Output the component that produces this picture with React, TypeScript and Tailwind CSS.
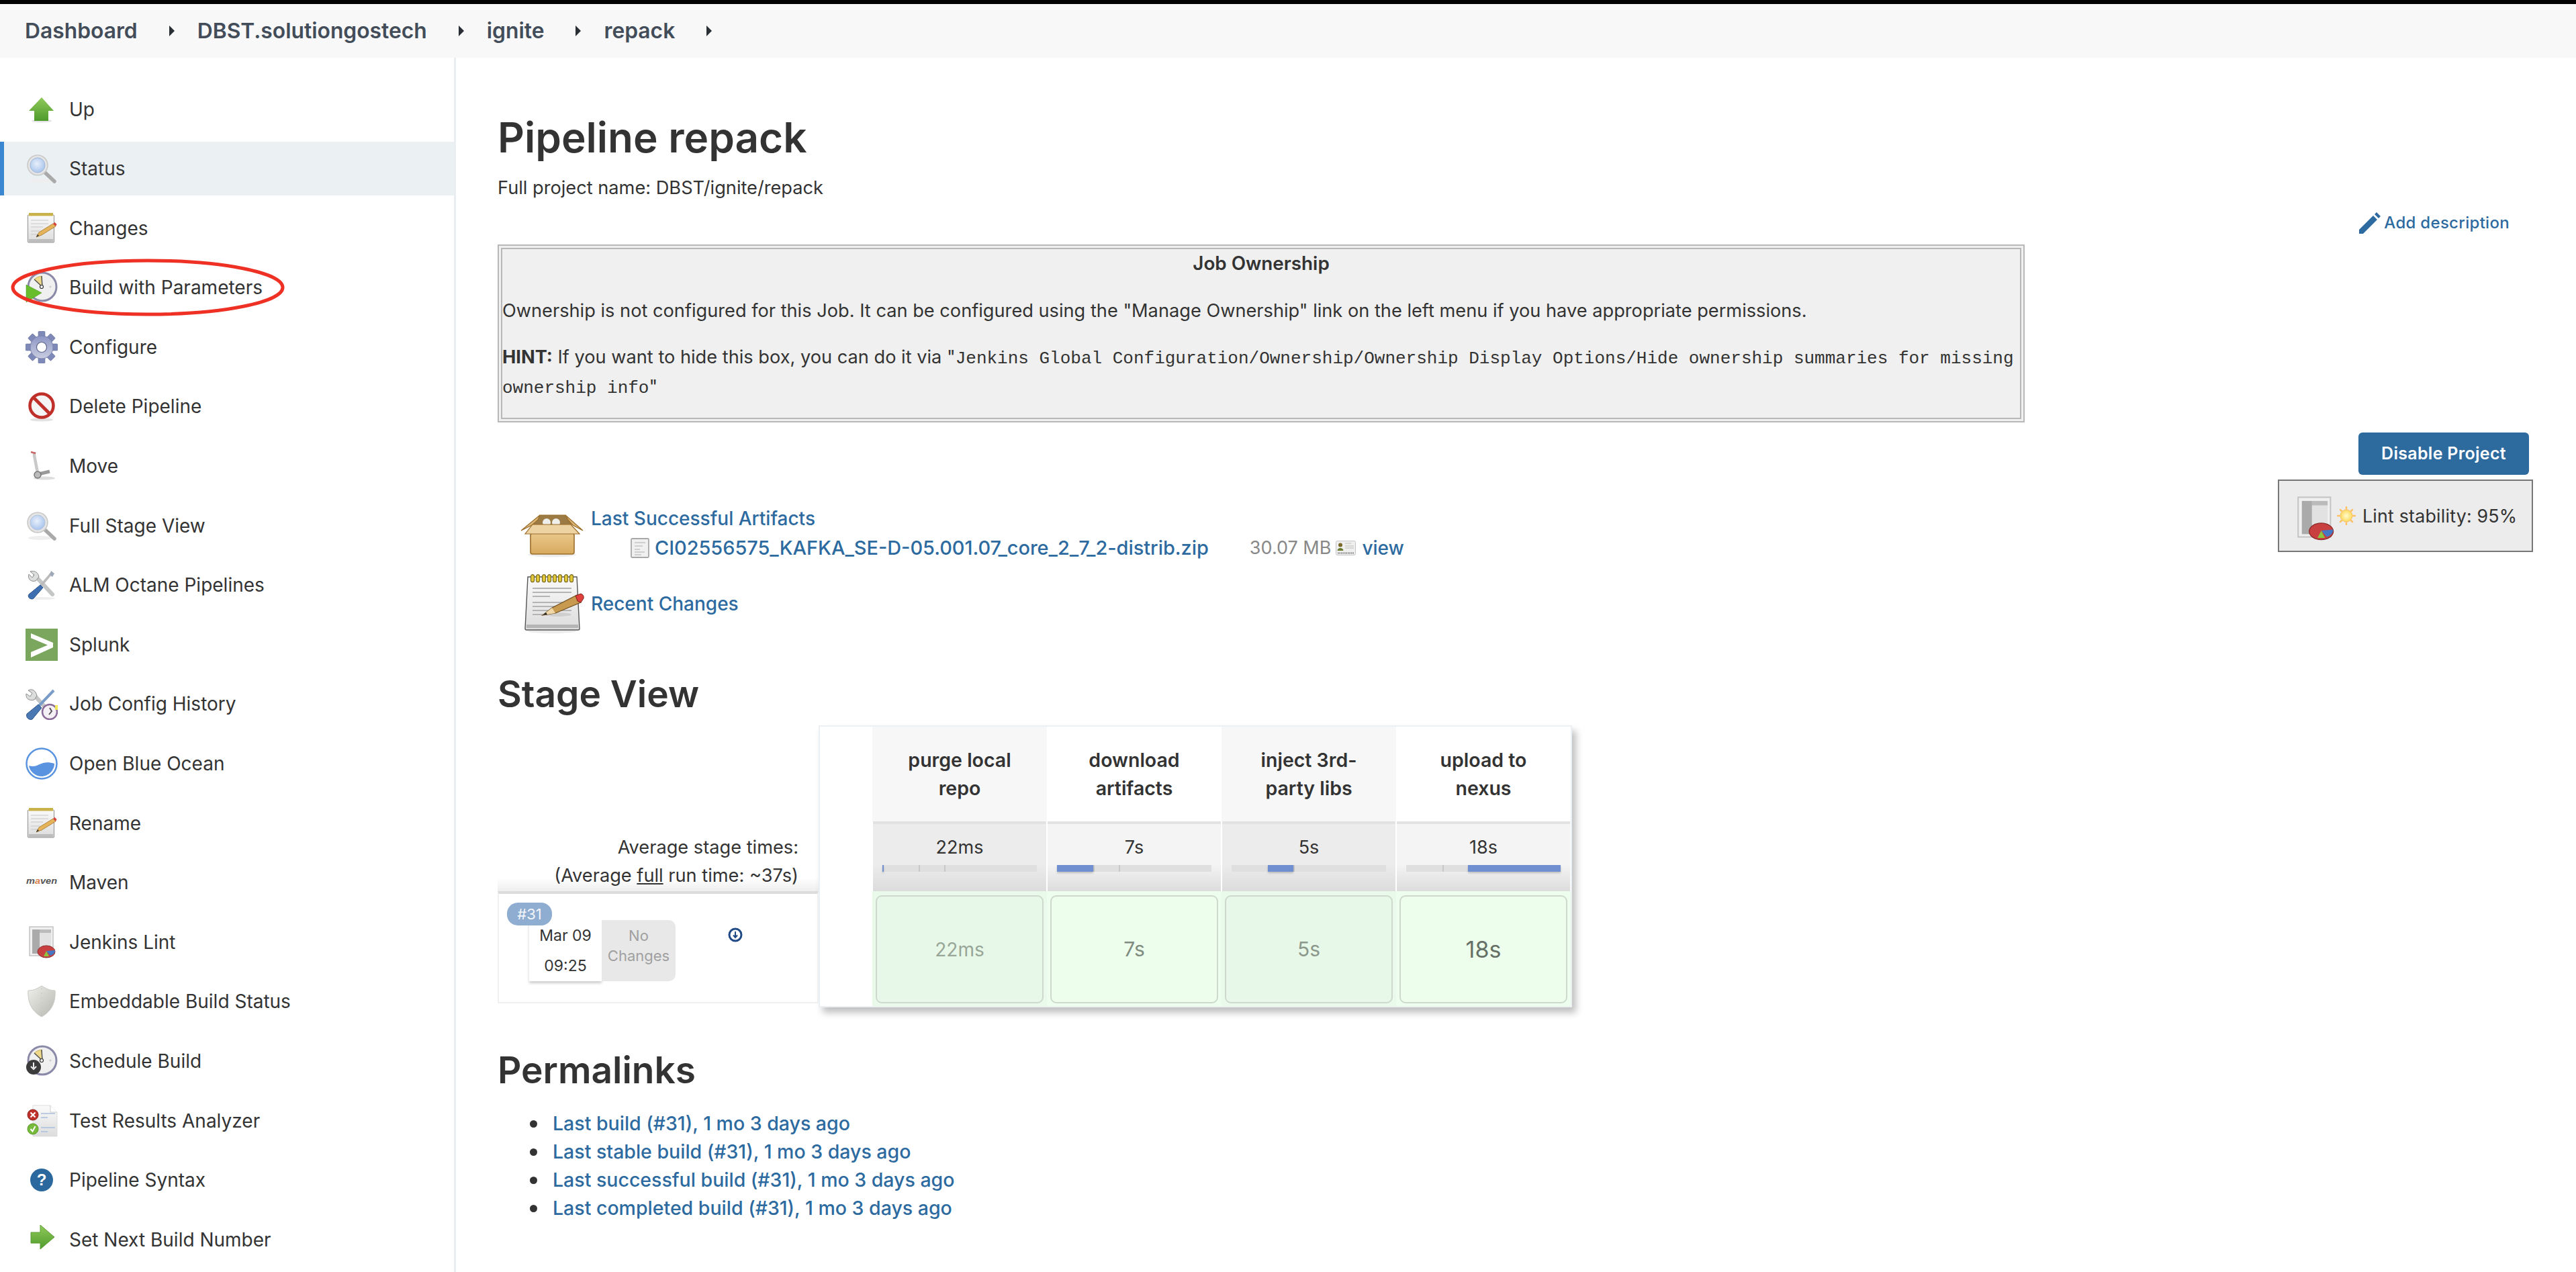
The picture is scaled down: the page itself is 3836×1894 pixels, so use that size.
import type { ReactNode } from 'react';

// shared svg gradients, mounted once at the top of the page
function SvgDefs() {
  return (
    <svg width="0" height="0" className="absolute">
      <defs>
        <linearGradient id="upGreen" x1="0" y1="0" x2="0" y2="1">
          <stop offset="0" stopColor="#8fca5a" />
          <stop offset="1" stopColor="#4f9a2c" />
        </linearGradient>
        <radialGradient id="lens" cx="0.45" cy="0.4" r="0.6">
          <stop offset="0" stopColor="#e8f0fb" />
          <stop offset="1" stopColor="#a9c4ec" />
        </radialGradient>
        <linearGradient id="paper" x1="0" y1="0" x2="0" y2="1">
          <stop offset="0" stopColor="#fafafa" />
          <stop offset="1" stopColor="#dcdcdc" />
        </linearGradient>
        <linearGradient id="gear" x1="0" y1="0" x2="0" y2="1">
          <stop offset="0" stopColor="#8c95c4" />
          <stop offset="1" stopColor="#c9cde0" />
        </linearGradient>
        <linearGradient id="carton" x1="0" y1="0" x2="0" y2="1">
          <stop offset="0" stopColor="#e9c88a" />
          <stop offset="1" stopColor="#d8a95f" />
        </linearGradient>
        <radialGradient id="sun" cx="0.5" cy="0.5" r="0.5">
          <stop offset="0" stopColor="#fffbd0" />
          <stop offset="1" stopColor="#fbd95a" />
        </radialGradient>
        <linearGradient id="shield" x1="0" y1="0" x2="1" y2="1">
          <stop offset="0" stopColor="#f0f0ec" />
          <stop offset="1" stopColor="#b4b6ae" />
        </linearGradient>
      </defs>
    </svg>
  );
}

function IconUp() {
  return (
    <svg viewBox="0 0 48 48" className="h-12 w-12">
      <ellipse cx="24" cy="41" rx="15" ry="2.5" fill="#e4e4e4" />
      <path d="M24 6 L42 26 H34 V41 H13 V26 H5 Z" fill="url(#upGreen)" />
    </svg>
  );
}

function IconSearch({ faded }: { faded?: boolean }) {
  return (
    <svg viewBox="0 0 48 48" className="h-12 w-12">
      <ellipse cx="22" cy="42" rx="18" ry="3" fill="#eee" />
      <path d="M28 29 L43 43" stroke="#a9a9a9" strokeWidth="5.5" strokeLinecap="round" />
      <circle cx="18" cy="19" r="15" fill="#e4e4e4" stroke="#c8c8c8" strokeWidth="1.5" />
      <circle cx="18" cy="19" r="11" fill="url(#lens)" stroke={faded ? '#b3c4dd' : '#a0b8da'} strokeWidth="1" />
    </svg>
  );
}

function IconNotepad() {
  return (
    <svg viewBox="0 0 48 48" className="h-12 w-12">
      <rect x="3.5" y="4" width="39" height="41" rx="1" fill="url(#paper)" stroke="#8f8f8f" strokeWidth="1" />
      <rect x="5" y="1" width="36" height="4.5" fill="#c9b24a" />
      <rect x="5" y="40" width="36" height="4" fill="#bdbdbd" />
      <path d="M8 12H34M8 17H34M8 22H26M8 28H22M8 33H18" stroke="#c8c8c8" strokeWidth="1.2" />
      <path d="M16 37 L20 30 L41 17 L45 21 L24 34 Z" fill="#e4b35a" stroke="#a5772e" strokeWidth="0.8" />
      <path d="M41 17 L45 21 L46.5 18 L43.5 15 Z" fill="#d9453d" />
      <path d="M16 37 L18 33 L20 35 Z" fill="#333" />
    </svg>
  );
}

function IconClock({ badge }: { badge: 'play' | 'schedule' }) {
  return (
    <svg viewBox="0 0 48 48" className="h-12 w-12">
      <circle cx="25" cy="23" r="21" fill="#f0f0f0" stroke="#8b89a8" strokeWidth="3" />
      <path d="M25 23 L13 12 A17 17 0 0 1 24 7 Z" fill="#eed98a" stroke="#c2a94c" strokeWidth="0.8" />
      <path d="M25 23 L13 12 M25 23 L24 7" stroke="#555" strokeWidth="1.5" />
      <circle cx="24" cy="23" r="2.5" fill="#fff" stroke="#333" strokeWidth="1.2" />
      <circle cx="37" cy="23" r="1.5" fill="#ccc" />
      {badge === 'play' ? (
        <path d="M1 20 L24 32 L1 46 Z" fill="#67bd2c" stroke="#4a9a1e" strokeWidth="0.6" />
      ) : (
        <>
          <circle cx="12" cy="33" r="11" fill="#3c3c3c" />
          <path d="M12 26 V34 M8 32 L12 36 L16 32" stroke="#eee" strokeWidth="2" fill="none" />
        </>
      )}
    </svg>
  );
}

function IconGear() {
  return (
    <svg viewBox="0 0 48 48" className="h-12 w-12">
      <g fill="#7f89b8" stroke="#6a73a0" strokeWidth="0.6">
        <rect x="19" y="0" width="10" height="10" rx="1.5" />
        <rect x="19" y="0" width="10" height="10" rx="1.5" transform="rotate(45 24 24)" />
        <rect x="19" y="0" width="10" height="10" rx="1.5" transform="rotate(90 24 24)" />
        <rect x="19" y="0" width="10" height="10" rx="1.5" transform="rotate(135 24 24)" />
        <rect x="19" y="0" width="10" height="10" rx="1.5" transform="rotate(180 24 24)" />
        <rect x="19" y="0" width="10" height="10" rx="1.5" transform="rotate(225 24 24)" />
        <rect x="19" y="0" width="10" height="10" rx="1.5" transform="rotate(270 24 24)" />
        <rect x="19" y="0" width="10" height="10" rx="1.5" transform="rotate(315 24 24)" />
      </g>
      <circle cx="24" cy="24" r="17" fill="url(#gear)" stroke="#7a83ad" strokeWidth="1" />
      <circle cx="24" cy="24" r="7.5" fill="#fff" stroke="#5b6388" strokeWidth="1.2" />
    </svg>
  );
}

function IconNoEntry() {
  return (
    <svg viewBox="0 0 48 48" className="h-12 w-12">
      <ellipse cx="24" cy="44" rx="17" ry="2.5" fill="#e2e2e2" />
      <circle cx="24" cy="23" r="17.5" fill="#f5f5f5" stroke="#c0302b" strokeWidth="4.5" />
      <path d="M12 11 L36 35" stroke="#c0302b" strokeWidth="5" />
    </svg>
  );
}

function IconMove() {
  return (
    <svg viewBox="0 0 48 48" className="h-12 w-12">
      <ellipse cx="28" cy="42" rx="16" ry="2.5" fill="#ddd" />
      <path d="M13 3 L13 8 L18 34" stroke="#c9c9c9" strokeWidth="4.5" fill="none" />
      <path d="M8 3 L15 5" stroke="#c66" strokeWidth="2.5" />
      <path d="M19 36 L36 32" stroke="#999" strokeWidth="5" />
      <circle cx="18" cy="37" r="5" fill="#bbb" stroke="#777" strokeWidth="1.5" />
    </svg>
  );
}

function IconTools() {
  return (
    <svg viewBox="0 0 48 48" className="h-12 w-12">
      <ellipse cx="24" cy="44" rx="20" ry="2" fill="#eee" />
      <path d="M14 10 L40 38" stroke="#c4c6c6" strokeWidth="6" strokeLinecap="round" />
      <path d="M7 4 L13 9 L10 13 L5 8 C3 14 7 20 15 18 L20 12 C19 5 13 2 7 4 Z" fill="#dcdedd" stroke="#8b8b8b" strokeWidth="1" />
      <path d="M40 5 L22 26" stroke="#bbb" strokeWidth="3.5" />
      <path d="M38 3 L43 7 L40 12 L36 9 Z" fill="#9da9b8" />
      <path d="M22 24 L26 28 L12 44 C8 47 2 42 5 38 Z" fill="#3d6fb0" stroke="#2b5590" strokeWidth="1" />
    </svg>
  );
}

function IconSplunk() {
  return (
    <svg viewBox="0 0 48 48" className="h-12 w-12">
      <rect width="48" height="48" fill="#7ba65d" />
      <path d="M8 7 L41 21 V28 L8 43 V35 L33 24.5 L8 14 Z" fill="#fff" />
    </svg>
  );
}

function IconJobConfig() {
  return (
    <svg viewBox="0 0 48 48" className="h-12 w-12">
      <path d="M12 10 L32 32" stroke="#c4c6c6" strokeWidth="6" />
      <path d="M4 4 L10 8 L7 13 L1 9 C0 16 5 20 13 18 L17 12 C15 4 10 1 4 4 Z" fill="#dcdedd" stroke="#8b8b8b" strokeWidth="1" />
      <path d="M42 4 L20 27" stroke="#7a9cc8" strokeWidth="4" />
      <path d="M19 25 L24 30 L10 47 C5 49 0 44 2 39 Z" fill="#4a78b2" stroke="#2b5590" strokeWidth="1" />
      <circle cx="36" cy="36" r="11" fill="#f5f0f5" stroke="#8a6a9a" strokeWidth="2.5" />
      <path d="M36 30 L39 35 L35 40" stroke="#555" strokeWidth="2" fill="none" />
      <rect x="44" y="26" width="4" height="7" fill="#f2e85a" />
    </svg>
  );
}

function IconOcean() {
  return (
    <svg viewBox="0 0 48 48" className="h-12 w-12">
      <circle cx="24" cy="24" r="22.5" fill="#fff" stroke="#5a94e0" strokeWidth="2.5" />
      <path d="M5 27 C12 29 15 28 21 25 C27 22 34 21 43 24 C43 34 34 43 24 43 C14 43 6 35 5 27 Z" fill="#5a94e0" />
    </svg>
  );
}

function IconMaven() {
  return (
    <svg viewBox="0 0 48 48" className="h-12 w-12">
      <text x="1" y="26" textLength="46" lengthAdjust="spacingAndGlyphs" fontFamily="Liberation Sans, sans-serif" fontStyle="italic" fontWeight="700" fontSize="13" fill="#555">
        m<tspan fill="#d9804a">a</tspan>ven
      </text>
    </svg>
  );
}

function IconLint() {
  return (
    <svg viewBox="0 0 48 48" className="h-full w-full">
      <rect x="6" y="1" width="35" height="43" fill="#f0f0f0" stroke="#c4c4c4" strokeWidth="1.5" />
      <rect x="10" y="5" width="11" height="36" fill="#aaa" />
      <rect x="21" y="5" width="17" height="5" fill="#bbb" />
      <rect x="21" y="10" width="17" height="31" fill="#e2e2e2" />
      <ellipse cx="31" cy="38" rx="13" ry="9" fill="#c94040" stroke="#8c2a2a" strokeWidth="1" />
      <path d="M31 37 L44 36 A13 9 0 0 1 37 44 Z" fill="#4478c4" />
      <path d="M31 37 L35 45 L27 45 Z" fill="#8cc63f" />
    </svg>
  );
}

function IconShield() {
  return (
    <svg viewBox="0 0 48 48" className="h-12 w-12">
      <path d="M24 1 L31 5 C35 7 40 8 44 8 C45 24 40 38 24 47 C8 38 3 24 4 8 C8 8 13 7 17 5 Z" fill="url(#shield)" stroke="#c8c8c4" strokeWidth="1" />
      <path d="M24 4 V44" stroke="#c4c4be" strokeWidth="1" strokeDasharray="2 5" />
    </svg>
  );
}

function IconTests() {
  return (
    <svg viewBox="0 0 48 48" className="h-12 w-12">
      <path d="M11 1 H37 L47 11 V47 H11 Z" fill="url(#paper)" stroke="#ddd" strokeWidth="1" />
      <path d="M37 1 V11 H47" fill="#fff" stroke="#ccc" strokeWidth="1" />
      <path d="M23 13H44M23 19H33M23 34H44M23 40H33" stroke="#a9bfe0" strokeWidth="1.5" />
      <circle cx="11" cy="15" r="8" fill="#c0302b" stroke="#8f2320" strokeWidth="1" />
      <path d="M7.5 11.5 L14.5 18.5 M14.5 11.5 L7.5 18.5" stroke="#fff" strokeWidth="2.2" />
      <circle cx="11" cy="36" r="8" fill="#78bb3c" stroke="#5b9a2a" strokeWidth="1" />
      <path d="M7.5 36 L10.5 39.5 L14.5 32" stroke="#fff" strokeWidth="2" fill="none" />
    </svg>
  );
}

function IconHelp() {
  return (
    <svg viewBox="0 0 48 48" className="h-12 w-12">
      <circle cx="24" cy="24" r="17" fill="#2b689e" />
      <text x="24" y="32" textAnchor="middle" fontFamily="Liberation Sans, sans-serif" fontWeight="700" fontSize="24" fill="#fff">
        ?
      </text>
    </svg>
  );
}

function IconNext() {
  return (
    <svg viewBox="0 0 48 48" className="h-12 w-12">
      <path d="M8 13 H22 V2 L43 20 L22 38 V29 H8 Z" fill="url(#upGreen)" stroke="#5e9e37" strokeWidth="1" />
    </svg>
  );
}

function IconBox() {
  return (
    <svg viewBox="0 0 95 64" className="h-16 w-[95px]">
      <ellipse cx="47" cy="60" rx="36" ry="3.5" fill="#ececec" />
      <path d="M29 1 H67 L76 16 H18 Z" fill="#9c7a44" stroke="#9b6d2b" strokeWidth="1.2" />
      <circle cx="39" cy="12" r="6" fill="#eeeeea" />
      <circle cx="53" cy="12" r="6" fill="#eeeeea" />
      <path d="M29 1 L1 24 L17 16 L26 8 Z" fill="#dcb877" stroke="#9b6d2b" strokeWidth="1.2" />
      <path d="M67 1 L93 24 L78 16 L71 8 Z" fill="#dcb877" stroke="#9b6d2b" strokeWidth="1.2" />
      <rect x="15" y="28" width="65" height="31" rx="3" fill="url(#carton)" stroke="#9b6d2b" strokeWidth="1.6" />
      <path d="M18 15 H75 L88 29 H7 Z" fill="#ecd3a1" stroke="#9b6d2b" strokeWidth="1.2" />
    </svg>
  );
}

function IconBigNotepad() {
  return (
    <svg viewBox="0 0 90 88" className="h-[88px] w-[90px]">
      <ellipse cx="41" cy="85" rx="36" ry="3" fill="#ececec" />
      <path d="M5 4 H78 L82 81 Q82 83 80 83 H3 Q1 83 1 81 Z" fill="url(#paper)" stroke="#555" strokeWidth="1.4" />
      <rect x="3" y="75" width="77" height="5" fill="#b5b5b5" />
      <g fill="#e3c93a" stroke="#7b6c1c" strokeWidth="1.2">
        <rect x="9.5" y="0.7" width="5" height="11" rx="2.5" />
        <rect x="17.5" y="0.7" width="5" height="11" rx="2.5" />
        <rect x="26.5" y="0.7" width="5" height="11" rx="2.5" />
        <rect x="34.5" y="0.7" width="5" height="11" rx="2.5" />
        <rect x="42.5" y="0.7" width="5" height="11" rx="2.5" />
        <rect x="50.5" y="0.7" width="5" height="11" rx="2.5" />
        <rect x="59.5" y="0.7" width="5" height="11" rx="2.5" />
        <rect x="67.5" y="0.7" width="5" height="11" rx="2.5" />
      </g>
      <path d="M12 21H70M12 27H70M12 33H38M12 42H70M12 48H70M12 54H70M12 60H36" stroke="#b4b4b4" strokeWidth="1.8" />
      <ellipse cx="50" cy="60" rx="20" ry="3" fill="#cfcfcf" />
      <path d="M27 61 L41 50 L78 31 L84 42 L46 58 Z" fill="#c89a50" stroke="#6d4c1c" strokeWidth="1.2" />
      <path d="M27 61 L41 50 L46 58 Z" fill="#f0d8a8" />
      <path d="M27 61 L32 57 L34 60 Z" fill="#222" />
      <path d="M76 32 L84 29 Q89 31 88 36 L84 42 L79 40 Z" fill="#e0403c" stroke="#7a1f1c" strokeWidth="1" />
    </svg>
  );
}

function IconSun() {
  return (
    <svg viewBox="0 0 28 28" className="h-7 w-7">
      <g stroke="#fbc26a" strokeWidth="2.5" strokeLinecap="round">
        <path d="M14 1V27M1 14H27M5 5L23 23M23 5L5 23" />
      </g>
      <circle cx="14" cy="14" r="9" fill="url(#sun)" stroke="#fbc26a" strokeWidth="1" />
    </svg>
  );
}

function IconFile() {
  return (
    <svg viewBox="0 0 28 30" className="h-[30px] w-[28px]">
      <rect x="1" y="1" width="26" height="28" rx="1.5" fill="#f0f0f0" stroke="#a8a8a8" strokeWidth="1.8" />
      <path d="M6 7H22M6 12H18M6 17H14M6 21H21M6 25H16" stroke="#cfcfcf" strokeWidth="2" />
    </svg>
  );
}

function IconView() {
  return (
    <svg viewBox="0 0 30 22" className="h-[22px] w-[30px]">
      <rect x="0.5" y="0.5" width="29" height="21" rx="2" fill="#efefef" stroke="#c4c4c4" />
      <circle cx="7" cy="6.5" r="3" fill="#7a6a2a" />
      <path d="M2.5 15 C2.5 9.5 11.5 9.5 11.5 15 Z" fill="#6b7d30" />
      <path d="M14 4H23M14 8H27M14 11H27" stroke="#bdbdb6" strokeWidth="1.2" />
      <path d="M3 18.5H27" stroke="#777" strokeWidth="2" strokeDasharray="1.5 1" />
    </svg>
  );
}

const sideItems: { label: string; icon: ReactNode; active?: boolean }[] = [
  { label: 'Up', icon: <IconUp /> },
  { label: 'Status', icon: <IconSearch />, active: true },
  { label: 'Changes', icon: <IconNotepad /> },
  { label: 'Build with Parameters', icon: <IconClock badge="play" /> },
  { label: 'Configure', icon: <IconGear /> },
  { label: 'Delete Pipeline', icon: <IconNoEntry /> },
  { label: 'Move', icon: <IconMove /> },
  { label: 'Full Stage View', icon: <IconSearch faded /> },
  { label: 'ALM Octane Pipelines', icon: <IconTools /> },
  { label: 'Splunk', icon: <IconSplunk /> },
  { label: 'Job Config History', icon: <IconJobConfig /> },
  { label: 'Open Blue Ocean', icon: <IconOcean /> },
  { label: 'Rename', icon: <IconNotepad /> },
  { label: 'Maven', icon: <IconMaven /> },
  { label: 'Jenkins Lint', icon: <div className="h-12 w-12"><IconLint /></div> },
  { label: 'Embeddable Build Status', icon: <IconShield /> },
  { label: 'Schedule Build', icon: <IconClock badge="schedule" /> },
  { label: 'Test Results Analyzer', icon: <IconTests /> },
  { label: 'Pipeline Syntax', icon: <IconHelp /> },
  { label: 'Set Next Build Number', icon: <IconNext /> },
];

const crumbs = ['Dashboard', 'DBST.solutiongostech', 'ignite', 'repack'];

const stages = [
  { name: ['purge local', 'repo'], avg: '22ms', start: 0, width: 2, cell: 'text-[28px] text-[#98a698]' },
  { name: ['download', 'artifacts'], avg: '7s', start: 0, width: 54, cell: 'text-[30px] text-[#7f8c7f]' },
  { name: ['inject 3rd-', 'party libs'], avg: '5s', start: 54, width: 38, cell: 'text-[30px] text-[#8b988b]' },
  { name: ['upload to', 'nexus'], avg: '18s', start: 92, width: 138, cell: 'text-[34px] text-[#667066]' },
];

const permalinks = [
  'Last build (#31), 1 mo 3 days ago',
  'Last stable build (#31), 1 mo 3 days ago',
  'Last successful build (#31), 1 mo 3 days ago',
  'Last completed build (#31), 1 mo 3 days ago',
];

function Sidebar() {
  return (
    <aside className="w-[679px] shrink-0 border-r-[3px] border-[#e9eef3] pt-[36.5px]">
      <nav className="flex flex-col gap-[8.6px]">
        {sideItems.map((item) => (
          <a
            key={item.label}
            className={
              item.active
                ? 'relative flex h-[80px] items-center gap-[17px] border-l-[6px] border-[#3b86d0] bg-[#ebf0f3] pl-[32px]'
                : 'relative flex h-[80px] items-center gap-[17px] border-l-[6px] border-transparent pl-[32px]'
            }
          >
            {item.icon}
            <span className="text-[28px] text-[#333]">{item.label}</span>
            {item.label === 'Build with Parameters' && (
              <svg viewBox="0 0 410 88" className="absolute left-[8.5px] top-[-3px] h-[88px] w-[410px]">
                <ellipse cx="205" cy="43" rx="201" ry="40" fill="none" stroke="#ee3124" strokeWidth="5" />
              </svg>
            )}
          </a>
        ))}
      </nav>
    </aside>
  );
}

function StageColumn({ stage, index }: { stage: (typeof stages)[number]; index: number }) {
  const odd = index % 2 === 0;
  return (
    <div className="flex w-[260px] flex-col">
      <div className={odd ? 'flex h-[141px] flex-col items-center justify-center bg-[#f7f7f7] text-[28.5px] font-semibold leading-[42px] text-[#333]' : 'flex h-[141px] flex-col items-center justify-center bg-white text-[28.5px] font-semibold leading-[42px] text-[#333]'}>
        {stage.name.map((line) => (
          <span key={line}>{line}</span>
        ))}
      </div>
      <div className={odd ? 'mx-px flex h-[104px] flex-col items-center border-t-4 border-[#e2e2e2] bg-linear-to-b from-[#ececec] from-60% to-[#dcdcdc]' : 'mx-px flex h-[104px] flex-col items-center border-t-4 border-[#e2e2e2] bg-linear-to-b from-[#f4f4f4] from-60% to-[#dcdcdc]'}>
        <span className="mt-[18px] text-[27px] leading-[34px] text-[#333]">{stage.avg}</span>
        <div className="relative mt-[9px] h-[10px] w-[230px] bg-[#dfdfdf]">
          <div className="absolute inset-y-0 left-[54px] w-[2px] bg-[#c8c8c8]" />
          <div className="absolute inset-y-0 left-[92px] w-[2px] bg-[#c8c8c8]" />
          <div className="absolute inset-y-0 bg-[#6f8fd0] shadow-[0_2px_3px_rgba(0,0,0,0.2)]" style={{ left: stage.start, width: stage.width }} />
        </div>
      </div>
      <div className={odd ? 'h-[171px] bg-[#eafaea] p-[5px] pt-[6px]' : 'h-[171px] bg-[#eefeee] p-[5px] pt-[6px]'}>
        <div className={odd ? 'flex h-[161px] items-center justify-center rounded-[9px] border-2 border-[#ced9ce] bg-[#e8f8e8]' : 'flex h-[161px] items-center justify-center rounded-[9px] border-2 border-[#ced9ce] bg-[#edfeed]'}>
          <span className={stage.cell}>{stage.avg}</span>
        </div>
      </div>
    </div>
  );
}

function StageView() {
  return (
    <div className="mt-[15px] flex h-[420px] w-[1600px] items-stretch">
      <div className="flex h-[414px] w-[478px] flex-col">
        <div className="flex h-[247px] flex-col items-end justify-end bg-linear-to-b from-white from-92% to-[#eee] pb-[2px] pr-[30px] text-[27.2px] leading-[42px] text-[#333]">
          <span>Average stage times:</span>
          <span>
            (Average <u>full</u> run time: ~37s)
          </span>
        </div>
        <div className="relative h-[167px] border-x-2 border-t-4 border-b-2 border-[#f0f0f0] border-t-[#dcdcdc]">
          <div className="absolute left-[45px] top-[39px] flex h-[91px] w-[218px]">
            <div className="flex w-[108px] flex-col items-center justify-between bg-white py-[8px] text-[23px] leading-[30px] text-[#333] shadow-[0_3px_4px_rgba(0,0,0,0.2)]">
              <span>Mar 09</span>
              <span>09:25</span>
            </div>
            <div className="flex w-[110px] flex-col items-center rounded-r-[10px] bg-[#e8e8e8] pt-[8px] text-[22px] leading-[30px] text-[#a0a0a0]">
              <span>No</span>
              <span>Changes</span>
            </div>
          </div>
          <div className="absolute left-[12px] top-[13px] flex h-[34px] w-[67px] items-center justify-center rounded-[16px] bg-[#8fadd0] text-[22px] text-[#f2f5f9]">
            #31
          </div>
          <svg viewBox="0 0 22 22" className="absolute left-[341px] top-[50px] h-[22px] w-[22px]">
            <circle cx="11" cy="11" r="9" fill="none" stroke="#204a87" strokeWidth="3" />
            <path d="M11 6V14M8 11.5L11 15L14 11.5" fill="none" stroke="#204a87" strokeWidth="2" />
          </svg>
        </div>
      </div>
      <div className="flex h-[420px] border-2 border-[#edf0f2] bg-white shadow-[6px_8px_10px_rgba(0,0,0,0.25)]">
        <div className="w-[78px]" />
        {stages.map((stage, i) => (
          <StageColumn key={stage.avg} stage={stage} index={i} />
        ))}
      </div>
    </div>
  );
}

export default function App() {
  return (
    <div className="flex min-h-[1894px] flex-col bg-white font-['Inter',sans-serif] text-[#333]">
      <SvgDefs />
      <div className="h-[6px] bg-black" />
      <header className="flex h-[80px] items-center bg-[#f8f8f8] pl-[37px] text-[31.8px] font-semibold text-[#434d5a]">
        {crumbs.map((crumb) => (
          <div key={crumb} className="flex items-center">
            <span>{crumb}</span>
            <span className="ml-[47px] mr-[34px] h-0 w-0 border-y-[8px] border-l-[8px] border-y-transparent border-l-[#2a2f36]" />
          </div>
        ))}
      </header>

      <div className="flex flex-1">
        <Sidebar />
        <main className="relative flex-1 pl-[62px] pt-[83px]">
          <h1 className="text-[62px] font-semibold leading-[72px]">Pipeline repack</h1>
          <p className="mt-[21px] text-[27.2px] leading-[36px]">Full project name: DBST/ignite/repack</p>

          <a className="absolute right-[99px] top-[228px] flex items-center gap-[5px] text-[24px] font-medium tracking-[0.3px] text-[#2c6a9f]">
            <svg viewBox="0 0 32 32" className="h-8 w-8" fill="#2c6a9f">
              <path d="M0 32 V26 L21 5 L27 11 L6 32 Z M23 3 L26 0 L32 6 L29 9 Z" />
            </svg>
            Add description
          </a>
          <button className="absolute right-[70px] top-[558px] h-[63px] w-[254px] rounded-[6px] bg-[#2d6a9e] text-[25px] font-semibold tracking-[0.3px] text-white">
            Disable Project
          </button>
          <div className="absolute right-[64px] top-[628px] flex h-[108px] w-[380px] items-center border-2 border-[#777] bg-[#ececec] pl-[20px] text-[26.8px] tracking-[0.2px] text-[#333]">
            <div className="mt-[8px] h-[66px] w-[66px] shrink-0">
              <IconLint />
            </div>
            <span className="mr-[10px] flex">
              <IconSun />
            </span>
            Lint stability: 95%
          </div>

          <section className="mt-[66px] w-[2274px] border-[7px] border-double border-[#b8b8b8] bg-[#f0f0f0] text-[27.2px]">
            <div className="text-center text-[27.8px] font-semibold leading-[43px]">Job Ownership</div>
            <p className="mt-[27px] leading-[43px]">
              Ownership is not configured for this Job. It can be configured using the "Manage Ownership" link on the left menu if you have appropriate permissions.
            </p>
            <p className="mt-[27px] pb-[23px] leading-[42px]">
              <b className="font-bold">HINT:</b> If you want to hide this box, you can do it via "
              <span className="font-['Liberation_Mono',monospace] text-[26px]">
                Jenkins Global Configuration/Ownership/Ownership Display Options/Hide ownership summaries for missing ownership info
              </span>
              "
            </p>
          </section>

          <div className="mt-[137px] flex flex-col text-[28px] text-[#2c6a9f]">
            <div className="flex items-start">
              <div className="ml-[34px] mr-[10px] flex w-[95px] shrink-0">
                <IconBox />
              </div>
              <div className="-mt-[12px] flex flex-col">
                <a className="font-medium leading-[36px]">Last Successful Artifacts</a>
                <div className="ml-[59px] mt-[8px] flex items-center leading-[36px]">
                  <IconFile />
                  <a className="ml-[8px] text-[28.9px] font-medium">CI02556575_KAFKA_SE-D-05.001.07_core_2_7_2-distrib.zip</a>
                  <span className="ml-[61px] text-[27px] text-[#888]">30.07 MB</span>
                  <span className="ml-[7px] flex">
                    <IconView />
                  </span>
                  <a className="ml-[9px] font-medium">view</a>
                </div>
              </div>
            </div>
            <div className="mt-[21px] flex items-center">
              <div className="ml-[40px] mr-[9px] flex shrink-0">
                <IconBigNotepad />
              </div>
              <a className="font-medium">Recent Changes</a>
            </div>
          </div>

          <h2 className="mt-[58px] text-[55px] font-semibold leading-[64px]">Stage View</h2>
          <StageView />

          <h2 className="mt-[61px] text-[55px] font-semibold leading-[64px]">Permalinks</h2>
          <ul className="mt-[27px] flex flex-col text-[28.5px] font-medium leading-[42px] text-[#2c6a9f]">
            {permalinks.map((link) => (
              <li key={link} className="flex items-center pl-[48px]">
                <span className="mr-[23px] h-[11px] w-[11px] rounded-full bg-[#333]" />
                <a>{link}</a>
              </li>
            ))}
          </ul>
        </main>
      </div>
    </div>
  );
}
